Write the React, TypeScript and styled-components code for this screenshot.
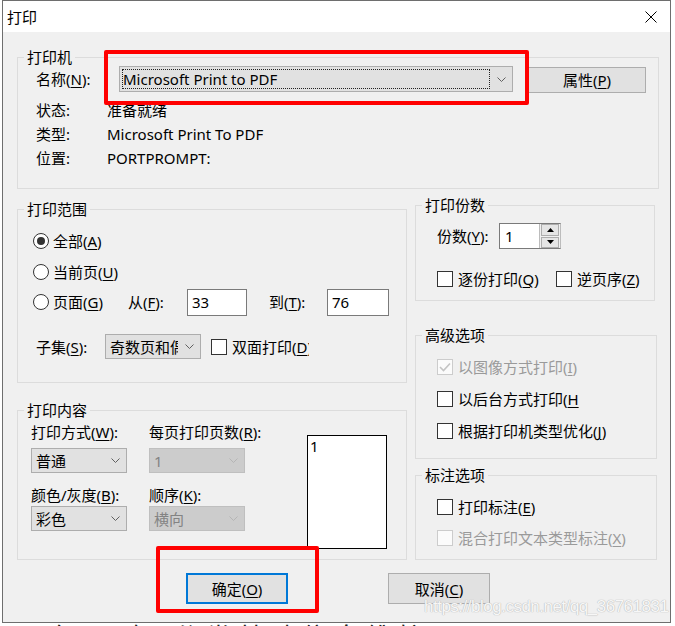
import React from 'react';
import styled, { createGlobalStyle } from 'styled-components';

const Global = createGlobalStyle`
  html, body { margin: 0; padding: 0; background: #fff; }
  body {
    font-family: "Noto Sans", "Noto Sans CJK SC", sans-serif;
    font-size: 15px;
    line-height: 20px;
    color: #000;
    overflow: hidden;
  }
  * { box-sizing: border-box; }
`;

const Page = styled.div`
  position: relative;
  width: 675px;
  height: 626px;
  overflow: hidden;
  background: #fff;
`;

const Dialog = styled.div`
  margin-left: 2px;
  width: 669px;
  height: 623px;
  border: 1px solid #6e6e6e;
  display: flex;
  flex-direction: column;
  background: #f0f0f0;
`;

const TitleBar = styled.div`
  flex: none;
  height: 31px;
  background: #fff;
  display: flex;
  align-items: center;
  justify-content: space-between;
  padding: 0 13px 0 4px;
`;

const Title = styled.span`
  line-height: 20px;
`;

const Body = styled.div`
  flex: 1;
  padding: 25px 0 0 14px;
  display: flex;
  flex-direction: column;
  align-items: flex-start;
`;

const GroupBox = styled.div<{ $w: number; $pb: number; $mt?: number }>`
  width: ${p => p.$w}px;
  margin-top: ${p => p.$mt ?? 0}px;
  border: 1px solid #dcdcdc;
  padding-bottom: ${p => p.$pb}px;
  display: flex;
  flex-direction: column;
  align-items: flex-start;
`;

const Legend = styled.div`
  margin: -11px 0 0 6px;
  padding: 0 3px;
  height: 20px;
  line-height: 20px;
  background: #f0f0f0;
  white-space: nowrap;
`;

const Acc = styled.span`
  text-decoration: underline;
  text-decoration-thickness: 1px;
  text-underline-offset: 2px;
`;

const NameRow = styled.div`
  display: flex;
  align-items: flex-start;
  margin: -1px 0 0 18px;
`;

const FieldLabel = styled.span<{ $w: number; $lh?: number; $ml?: number }>`
  flex: none;
  width: ${p => p.$w}px;
  margin-left: ${p => p.$ml ?? 0}px;
  line-height: ${p => p.$lh ?? 20}px;
  white-space: nowrap;
`;

const ComboBox = styled.div<{ $w: number; $h: number; $disabled?: boolean }>`
  flex: none;
  width: ${p => p.$w}px;
  height: ${p => p.$h}px;
  border: 1px solid ${p => (p.$disabled ? '#bfbfbf' : '#adadad')};
  background: ${p => (p.$disabled ? '#cccccc' : '#e1e1e1')};
  color: ${p => (p.$disabled ? '#838383' : '#000')};
  display: flex;
  align-items: center;
  padding-left: 4px;
`;

const ComboText = styled.span`
  flex: 1;
  min-width: 0;
  overflow: hidden;
  white-space: nowrap;
  line-height: 20px;
`;

const FocusText = styled.span`
  flex: 1;
  align-self: stretch;
  margin: 2px 0 2px -2px;
  border: 1px dotted #222;
  line-height: 18px;
  white-space: nowrap;
  overflow: hidden;
`;

const ChevronBox = styled.span`
  flex: none;
  width: 22px;
  display: flex;
  justify-content: center;
  align-items: center;
`;

const PushButton = styled.button<{ $w: number; $h: number; $default?: boolean; $ml?: number; $mt?: number }>`
  flex: none;
  width: ${p => p.$w}px;
  height: ${p => p.$h}px;
  margin: ${p => p.$mt ?? 0}px 0 0 ${p => p.$ml ?? 0}px;
  padding: 0;
  border: ${p => (p.$default ? '2px solid #0078d7' : '1px solid #adadad')};
  background: #e1e1e1;
  font: inherit;
  line-height: 20px;
  color: #000;
`;

const InfoGrid = styled.div`
  display: grid;
  grid-template-columns: 71px auto;
  grid-auto-rows: 24px;
  align-items: center;
  margin: 5px 0 0 18px;
`;

const Columns = styled.div`
  display: flex;
  align-items: flex-start;
  gap: 8px;
`;

const Column = styled.div<{ $pt: number }>`
  display: flex;
  flex-direction: column;
  align-items: flex-start;
  padding-top: ${p => p.$pt}px;
`;

const RadioRow = styled.div<{ $mt: number }>`
  display: flex;
  align-items: center;
  height: 30px;
  margin: ${p => p.$mt}px 0 0 15px;
`;

const ChoiceItem = styled.label<{ $w?: number; $disabled?: boolean; $ml?: number }>`
  flex: none;
  display: flex;
  align-items: center;
  gap: 5px;
  width: ${p => (p.$w ? `${p.$w}px` : 'auto')};
  margin-left: ${p => p.$ml ?? 0}px;
  color: ${p => (p.$disabled ? '#9a9a9a' : '#000')};
  line-height: 20px;
  white-space: nowrap;
`;

const RadioCircle = styled.span<{ $on?: boolean }>`
  flex: none;
  width: 16px;
  height: 16px;
  border-radius: 50%;
  border: 1px solid #333;
  background: #fff;
  display: flex;
  align-items: center;
  justify-content: center;
  margin-right: -1px;
  &::after {
    content: '';
    width: 8px;
    height: 8px;
    border-radius: 50%;
    background: ${p => (p.$on ? '#333' : 'transparent')};
  }
`;

const CheckSquare = styled.span<{ $disabled?: boolean }>`
  flex: none;
  width: 16px;
  height: 16px;
  border: 1px solid ${p => (p.$disabled ? '#cccccc' : '#333')};
  background: ${p => (p.$disabled ? '#fbfbfb' : '#fff')};
  display: flex;
  align-items: center;
  justify-content: center;
`;

const ClipText = styled.span<{ $w: number }>`
  width: ${p => p.$w}px;
  overflow: hidden;
`;

const TextInput = styled.div<{ $w: number }>`
  flex: none;
  width: ${p => p.$w}px;
  height: 27px;
  border: 1px solid #7a7a7a;
  background: #fff;
  padding-left: 4px;
  line-height: 25px;
`;

const SubsetRow = styled.div`
  display: flex;
  align-items: center;
  margin: 17px 0 0 18px;
`;

const ContentBody = styled.div`
  display: flex;
  align-items: flex-start;
  margin-left: 13px;
`;

const OptionCol = styled.div<{ $ml?: number }>`
  display: flex;
  flex-direction: column;
  align-items: flex-start;
  margin: 2px 0 0 ${p => p.$ml ?? 0}px;
  width: 96px;
`;

const OptLabel = styled.span<{ $mt?: number }>`
  margin-top: ${p => p.$mt ?? 0}px;
  line-height: 20px;
  white-space: nowrap;
`;

const Spaced = styled.div<{ $mt: number }>`
  margin-top: ${p => p.$mt}px;
`;

const Preview = styled.div`
  flex: none;
  width: 80px;
  height: 114px;
  margin: 15px 0 0 62px;
  border: 1px solid #000;
  background: #fff;
  padding: 1px 0 0 2px;
  line-height: 18px;
`;

const CopiesRow = styled.div`
  display: flex;
  align-items: center;
  margin: 8px 0 0 21px;
`;

const SpinBox = styled.div`
  flex: none;
  width: 62px;
  height: 26px;
  border: 1px solid #7a7a7a;
  border-right-color: #bcbcbc;
  background: #fff;
  display: flex;
  align-items: center;
`;

const SpinValue = styled.span`
  flex: 1;
  padding-left: 5px;
  line-height: 20px;
`;

const SpinButtons = styled.span`
  flex: none;
  width: 21px;
  align-self: stretch;
  display: flex;
  flex-direction: column;
  gap: 1px;
  padding: 0 1px;
  border-left: 1px solid #bcbcbc;
  background: #f0f0f0;
`;

const SpinBtn = styled.span`
  flex: 1;
  border: 1px solid #adadad;
  background: #e5e5e5;
  display: flex;
  align-items: center;
  justify-content: center;
`;

const CheckRow = styled.div<{ $mt: number }>`
  display: flex;
  align-items: center;
  height: 20px;
  margin: ${p => p.$mt}px 0 0 21px;
`;

const ButtonRow = styled.div`
  display: flex;
  margin-top: 13px;
`;

const Highlight = styled.div<{ $x: number; $y: number; $w: number; $h: number }>`
  position: absolute;
  left: ${p => p.$x}px;
  top: ${p => p.$y}px;
  width: ${p => p.$w}px;
  height: ${p => p.$h}px;
  border: 4px solid #ff0000;
  border-radius: 2px;
  pointer-events: none;
`;

const Watermark = styled.div`
  position: absolute;
  left: 424px;
  top: 597px;
  font-family: "Liberation Sans", Arial, sans-serif;
  font-size: 17px;
  letter-spacing: -0.5px;
  line-height: 20px;
  color: #f7f7f7;
  text-shadow: 0 0 1px #b0b0b0, 0 0 1px #c0c0c0;
  white-space: nowrap;
  pointer-events: none;
`;

const BehindText = styled.div`
  margin: -1px 0 0 20px;
  font-size: 26px;
  line-height: 30px;
  color: #222;
  letter-spacing: 6px;
  white-space: nowrap;
`;

const Chevron = ({ disabled }: { disabled?: boolean }) => (
  <ChevronBox>
    <svg width="9" height="5" viewBox="0 0 9 5">
      <polyline points="0.5,0.5 4.5,4.5 8.5,0.5" fill="none" stroke={disabled ? '#b5b5b5' : '#606060'} strokeWidth="1" />
    </svg>
  </ChevronBox>
);

const CheckMark = () => (
  <svg width="12" height="10" viewBox="0 0 12 10">
    <polyline points="1,5 4.5,8.5 11,1.5" fill="none" stroke="#c4c4c4" strokeWidth="1.6" />
  </svg>
);

const Radio = ({ on, w, children }: { on?: boolean; w?: number; children: React.ReactNode }) => (
  <ChoiceItem $w={w}>
    <RadioCircle $on={on} />
    <span>{children}</span>
  </ChoiceItem>
);

const Check = ({
  w,
  ml,
  disabled,
  checked,
  clip,
  children,
}: {
  w?: number;
  ml?: number;
  disabled?: boolean;
  checked?: boolean;
  clip?: number;
  children: React.ReactNode;
}) => (
  <ChoiceItem $w={w} $ml={ml} $disabled={disabled}>
    <CheckSquare $disabled={disabled}>{checked && <CheckMark />}</CheckSquare>
    {clip ? <ClipText $w={clip}>{children}</ClipText> : <span>{children}</span>}
  </ChoiceItem>
);

export default function App() {
  return (
    <Page>
      <Global />
      <Dialog>
        <TitleBar>
          <Title>打印</Title>
          <svg width="12" height="12" viewBox="0 0 12 12">
            <path d="M0.5 0.5L11.5 11.5M11.5 0.5L0.5 11.5" stroke="#000" strokeWidth="1" />
          </svg>
        </TitleBar>
        <Body>
          <GroupBox $w={642} $pb={18}>
            <Legend>打印机</Legend>
            <NameRow>
              <FieldLabel $w={83} $lh={26}>
                名称(<Acc>N</Acc>):
              </FieldLabel>
              <ComboBox $w={394} $h={26}>
                <FocusText>Microsoft Print to PDF</FocusText>
                <Chevron />
              </ComboBox>
              <PushButton $w={118} $h={26} $ml={15} $mt={1}>
                属性(<Acc>P</Acc>)
              </PushButton>
            </NameRow>
            <InfoGrid>
              <span>状态:</span>
              <span>准备就绪</span>
              <span>类型:</span>
              <span>Microsoft Print To PDF</span>
              <span>位置:</span>
              <span>PORTPROMPT:</span>
            </InfoGrid>
          </GroupBox>

          <Columns>
            <Column $pt={20}>
              <GroupBox $w={390} $pb={23}>
                <Legend>打印范围</Legend>
                <RadioRow $mt={7}>
                  <Radio on>
                    全部(<Acc>A</Acc>)
                  </Radio>
                </RadioRow>
                <RadioRow $mt={1}>
                  <Radio>
                    当前页(<Acc>U</Acc>)
                  </Radio>
                </RadioRow>
                <RadioRow $mt={0}>
                  <Radio w={95}>
                    页面(<Acc>G</Acc>)
                  </Radio>
                  <FieldLabel $w={59}>
                    从(<Acc>F</Acc>):
                  </FieldLabel>
                  <TextInput $w={60}>33</TextInput>
                  <FieldLabel $w={58} $ml={22}>
                    到(<Acc>T</Acc>):
                  </FieldLabel>
                  <TextInput $w={62}>76</TextInput>
                </RadioRow>
                <SubsetRow>
                  <FieldLabel $w={69}>
                    子集(<Acc>S</Acc>):
                  </FieldLabel>
                  <ComboBox $w={96} $h={25}>
                    <ComboText>奇数页和偶数页</ComboText>
                    <Chevron />
                  </ComboBox>
                  <Check ml={10} clip={77}>
                    双面打印(<Acc>D</Acc>)
                  </Check>
                </SubsetRow>
              </GroupBox>

              <GroupBox $w={390} $pb={10} $mt={27}>
                <Legend>打印内容</Legend>
                <ContentBody>
                  <OptionCol>
                    <OptLabel>
                      打印方式(<Acc>W</Acc>):
                    </OptLabel>
                    <Spaced $mt={6}>
                      <ComboBox $w={96} $h={25}>
                        <ComboText>普通</ComboText>
                        <Chevron />
                      </ComboBox>
                    </Spaced>
                    <OptLabel $mt={12}>
                      颜色/灰度(<Acc>B</Acc>):
                    </OptLabel>
                    <Spaced $mt={1}>
                      <ComboBox $w={96} $h={25}>
                        <ComboText>彩色</ComboText>
                        <Chevron />
                      </ComboBox>
                    </Spaced>
                  </OptionCol>
                  <OptionCol $ml={22}>
                    <OptLabel>
                      每页打印页数(<Acc>R</Acc>):
                    </OptLabel>
                    <Spaced $mt={6}>
                      <ComboBox $w={96} $h={25} $disabled>
                        <ComboText>1</ComboText>
                        <Chevron disabled />
                      </ComboBox>
                    </Spaced>
                    <OptLabel $mt={12}>
                      顺序(<Acc>K</Acc>):
                    </OptLabel>
                    <Spaced $mt={1}>
                      <ComboBox $w={96} $h={25} $disabled>
                        <ComboText>横向</ComboText>
                        <Chevron disabled />
                      </ComboBox>
                    </Spaced>
                  </OptionCol>
                  <Preview>1</Preview>
                </ContentBody>
              </GroupBox>
            </Column>

            <Column $pt={16}>
              <GroupBox $w={240} $pb={11}>
                <Legend>打印份数</Legend>
                <CopiesRow>
                  <FieldLabel $w={62}>
                    份数(<Acc>Y</Acc>):
                  </FieldLabel>
                  <SpinBox>
                    <SpinValue>1</SpinValue>
                    <SpinButtons>
                      <SpinBtn>
                        <svg width="7" height="4" viewBox="0 0 7 4">
                          <polygon points="0,4 3.5,0 7,4" fill="#000" />
                        </svg>
                      </SpinBtn>
                      <SpinBtn>
                        <svg width="7" height="4" viewBox="0 0 7 4">
                          <polygon points="0,0 3.5,4 7,0" fill="#000" />
                        </svg>
                      </SpinBtn>
                    </SpinButtons>
                  </SpinBox>
                </CopiesRow>
                <CheckRow $mt={20}>
                  <Check w={119}>
                    逐份打印(<Acc>Q</Acc>)
                  </Check>
                  <Check>
                    逆页序(<Acc>Z</Acc>)
                  </Check>
                </CheckRow>
              </GroupBox>

              <GroupBox $w={242} $pb={17} $mt={34}>
                <Legend>高级选项</Legend>
                <CheckRow $mt={12}>
                  <Check disabled checked>
                    以图像方式打印(<Acc>I</Acc>)
                  </Check>
                </CheckRow>
                <CheckRow $mt={12}>
                  <Check clip={121}>
                    以后台方式打印(<Acc>H</Acc>)
                  </Check>
                </CheckRow>
                <CheckRow $mt={12}>
                  <Check>
                    根据打印机类型优化(<Acc>J</Acc>)
                  </Check>
                </CheckRow>
              </GroupBox>

              <GroupBox $w={242} $pb={11} $mt={16}>
                <Legend>标注选项</Legend>
                <CheckRow $mt={12}>
                  <Check>
                    打印标注(<Acc>E</Acc>)
                  </Check>
                </CheckRow>
                <CheckRow $mt={11}>
                  <Check disabled>
                    混合打印文本类型标注(<Acc>X</Acc>)
                  </Check>
                </CheckRow>
              </GroupBox>
            </Column>
          </Columns>

          <ButtonRow>
            <PushButton $w={102} $h={31} $ml={169} $default>
              确定(<Acc>O</Acc>)
            </PushButton>
            <PushButton $w={102} $h={31} $ml={100}>
              取消(<Acc>C</Acc>)
            </PushButton>
          </ButtonRow>
        </Body>
      </Dialog>
      <BehindText>明细 一般 分类基础信息维护</BehindText>
      <Highlight $x={104} $y={50} $w={425} $h={55} />
      <Highlight $x={156} $y={546} $w={163} $h={67} />
      <Watermark>https://blog.csdn.net/qq_36761831</Watermark>
    </Page>
  );
}
